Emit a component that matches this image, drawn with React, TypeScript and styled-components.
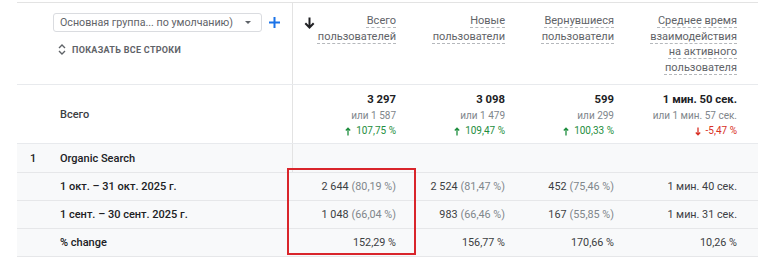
import React from "react";
import styled, { createGlobalStyle } from "styled-components";

const GlobalStyle = createGlobalStyle`
  html, body {
    margin: 0;
    padding: 0;
    background: #ffffff;
    font-family: Roboto, "Noto Sans", Arial, sans-serif;
    color: #3c4043;
  }
`;

const COLS = "276px 112px 109px 109px 123px 1fr";

const Page = styled.div`
  padding: 2px 10px 0 17px;
  width: 768px;
  box-sizing: border-box;
`;

const Table = styled.div`
  position: relative;
  border-top: 1px solid #e3e3e3;
`;

const Row = styled.div<{ $shaded?: boolean; $height: number }>`
  display: grid;
  grid-template-columns: ${COLS};
  height: ${(p) => p.$height}px;
  background: ${(p) => (p.$shaded ? "#f8f9fa" : "#ffffff")};
  border-bottom: 1px solid ${(p) => (p.$shaded ? "#e6e7e9" : "#e8eaed")};
  box-sizing: border-box;
`;

const LeftCell = styled.div<{ $divider?: boolean }>`
  display: flex;
  align-items: center;
  padding-left: 13px;
  font-size: 11px;
  font-weight: 500;
  color: #202124;
  white-space: nowrap;
  border-right: ${(p) => (p.$divider ? "1px solid #e3e3e3" : "none")};
`;

const IndexCell = styled.span`
  width: 30px;
  font-weight: 500;
`;

const Controls = styled.div`
  display: flex;
  flex-direction: column;
  padding: 10px 0 0 36px;
  border-right: 1px solid #e3e3e3;
`;

const SelectRow = styled.div`
  display: flex;
  align-items: center;
  gap: 7px;
`;

const Select = styled.div`
  width: 209px;
  height: 19px;
  flex-shrink: 0;
  box-sizing: border-box;
  border: 1px solid #dadce0;
  border-radius: 3px;
  display: flex;
  align-items: center;
  justify-content: space-between;
  padding: 0 10px 0 6px;
  font-size: 10.7px;
  color: #5f6368;
  white-space: nowrap;
  overflow: hidden;
`;

const Caret = styled.span`
  width: 0;
  height: 0;
  flex-shrink: 0;
  border-left: 3.5px solid transparent;
  border-right: 3.5px solid transparent;
  border-top: 3.5px solid #5f6368;
`;

const ShowAll = styled.div`
  display: flex;
  align-items: center;
  gap: 6px;
  margin: 12px 0 0 5px;
  font-size: 9px;
  font-weight: 700;
  letter-spacing: 0.3px;
  color: #5f6368;
  white-space: nowrap;
`;

const HeadCell = styled.div<{ $sort?: boolean }>`
  display: flex;
  justify-content: ${(p) => (p.$sort ? "space-between" : "flex-end")};
  align-items: flex-start;
  padding: 10px 9px 0 11px;
`;

const HeadLabel = styled.div`
  display: flex;
  flex-direction: column;
  align-items: flex-end;
  font-size: 11px;
  line-height: 15.5px;
  color: #5f6368;
`;

const HeadLine = styled.span`
  text-decoration: underline dashed #b5b8bc;
  text-decoration-thickness: 1px;
  text-underline-offset: 3px;
  white-space: nowrap;
`;

const TotalLabel = styled.div`
  display: flex;
  align-items: center;
  padding-left: 43px;
  font-size: 11px;
  font-weight: 500;
  color: #3c4043;
  border-right: 1px solid #e3e3e3;
`;

const TotalCell = styled.div`
  display: flex;
  flex-direction: column;
  align-items: flex-end;
  padding: 7px 9px 0 0;
  white-space: nowrap;
`;

const TotalValue = styled.span`
  font-size: 11.3px;
  font-weight: 700;
  line-height: 16px;
  color: #202124;
`;

const TotalPrev = styled.span`
  font-size: 10px;
  line-height: 16px;
  color: #80868b;
`;

const Delta = styled.span<{ $up: boolean }>`
  display: flex;
  align-items: center;
  gap: 5px;
  font-size: 10px;
  line-height: 14px;
  color: ${(p) => (p.$up ? "#1e8e3e" : "#d93025")};
`;

const ValueCell = styled.div`
  display: flex;
  align-items: center;
  justify-content: flex-end;
  padding-right: 9px;
  font-size: 10.8px;
  color: #3c4043;
  white-space: nowrap;
`;

const Share = styled.span`
  color: #80868b;
  margin-left: 3px;
`;

const Highlight = styled.div`
  position: absolute;
  left: 270px;
  top: 165px;
  width: 129px;
  height: 87px;
  border: 2px solid #d9252b;
  box-sizing: border-box;
  pointer-events: none;
`;

const Empty = styled.div``;

const Icon = styled.svg`
  flex-shrink: 0;
  display: block;
`;

const SortArrow = () => (
  <Icon width="11" height="12" viewBox="0 0 11 12" style={{ marginTop: 4 }}>
    <path d="M5.5 0.5v10M1.3 6.3l4.2 4.2 4.2-4.2" stroke="#202124" strokeWidth="2" fill="none" />
  </Icon>
);

const Plus = () => (
  <Icon width="11" height="11" viewBox="0 0 11 11">
    <path d="M5.5 0v11M0 5.5h11" stroke="#1a73e8" strokeWidth="2" />
  </Icon>
);

const Expand = () => (
  <Icon width="8" height="11" viewBox="0 0 8 11">
    <path d="M1 4l3-3 3 3M1 7l3 3 3-3" stroke="#5f6368" strokeWidth="1.4" fill="none" />
  </Icon>
);

const Arrow = ({ up }: { up: boolean }) => (
  <Icon width="6" height="9" viewBox="0 0 6 9">
    {up ? (
      <path d="M3 8.5V1.5M0.8 3.5L3 1.2l2.2 2.3" stroke="currentColor" strokeWidth="1.3" fill="none" />
    ) : (
      <path d="M3 0.5v7M0.8 5.5L3 7.8l2.2-2.3" stroke="currentColor" strokeWidth="1.3" fill="none" />
    )}
  </Icon>
);

const headers = [
  ["Всего", "пользователей"],
  ["Новые", "пользователи"],
  ["Вернувшиеся", "пользователи"],
  ["Среднее время", "взаимодействия", "на активного", "пользователя"],
];

const totals = [
  { value: "3 297", prev: "или 1 587", delta: "107,75 %", up: true },
  { value: "3 098", prev: "или 1 479", delta: "109,47 %", up: true },
  { value: "599", prev: "или 299", delta: "100,33 %", up: true },
  { value: "1 мин. 50 сек.", prev: "или 1 мин. 57 сек.", delta: "-5,47 %", up: false },
];

const periods = [
  {
    label: "1 окт. – 31 окт. 2025 г.",
    cells: [["2 644", "(80,19 %)"], ["2 524", "(81,47 %)"], ["452", "(75,46 %)"], ["1 мин. 40 сек.", ""]],
  },
  {
    label: "1 сент. – 30 сент. 2025 г.",
    cells: [["1 048", "(66,04 %)"], ["983", "(66,46 %)"], ["167", "(55,85 %)"], ["1 мин. 31 сек.", ""]],
  },
  {
    label: "% change",
    cells: [["152,29 %", ""], ["156,77 %", ""], ["170,66 %", ""], ["10,26 %", ""]],
  },
];

export default function App() {
  return (
    <Page>
      <GlobalStyle />
      <Table>
        <Row $height={82}>
          <Controls>
            <SelectRow>
              <Select>
                <span>Основная группа... по умолчанию)</span>
                <Caret />
              </Select>
              <Plus />
            </SelectRow>
            <ShowAll>
              <Expand />
              ПОКАЗАТЬ ВСЕ СТРОКИ
            </ShowAll>
          </Controls>
          {headers.map((lines, i) => (
            <HeadCell key={i} $sort={i === 0}>
              {i === 0 && <SortArrow />}
              <HeadLabel>
                {lines.map((l) => (
                  <HeadLine key={l}>{l}</HeadLine>
                ))}
              </HeadLabel>
            </HeadCell>
          ))}
          <Empty />
        </Row>
        <Row $height={59}>
          <TotalLabel>Всего</TotalLabel>
          {totals.map((t) => (
            <TotalCell key={t.value}>
              <TotalValue>{t.value}</TotalValue>
              <TotalPrev>{t.prev}</TotalPrev>
              <Delta $up={t.up}>
                <Arrow up={t.up} />
                {t.delta}
              </Delta>
            </TotalCell>
          ))}
          <Empty />
        </Row>
        <Row $shaded $height={29}>
          <LeftCell $divider>
            <IndexCell>1</IndexCell>
            Organic Search
          </LeftCell>
        </Row>
        {periods.map((p) => (
          <Row key={p.label} $shaded $height={28}>
            <LeftCell>
              <IndexCell />
              {p.label}
            </LeftCell>
            {p.cells.map(([v, s], i) => (
              <ValueCell key={i}>
                {v}
                {s && <Share>{s}</Share>}
              </ValueCell>
            ))}
            <Empty />
          </Row>
        ))}
        <Highlight />
      </Table>
    </Page>
  );
}
